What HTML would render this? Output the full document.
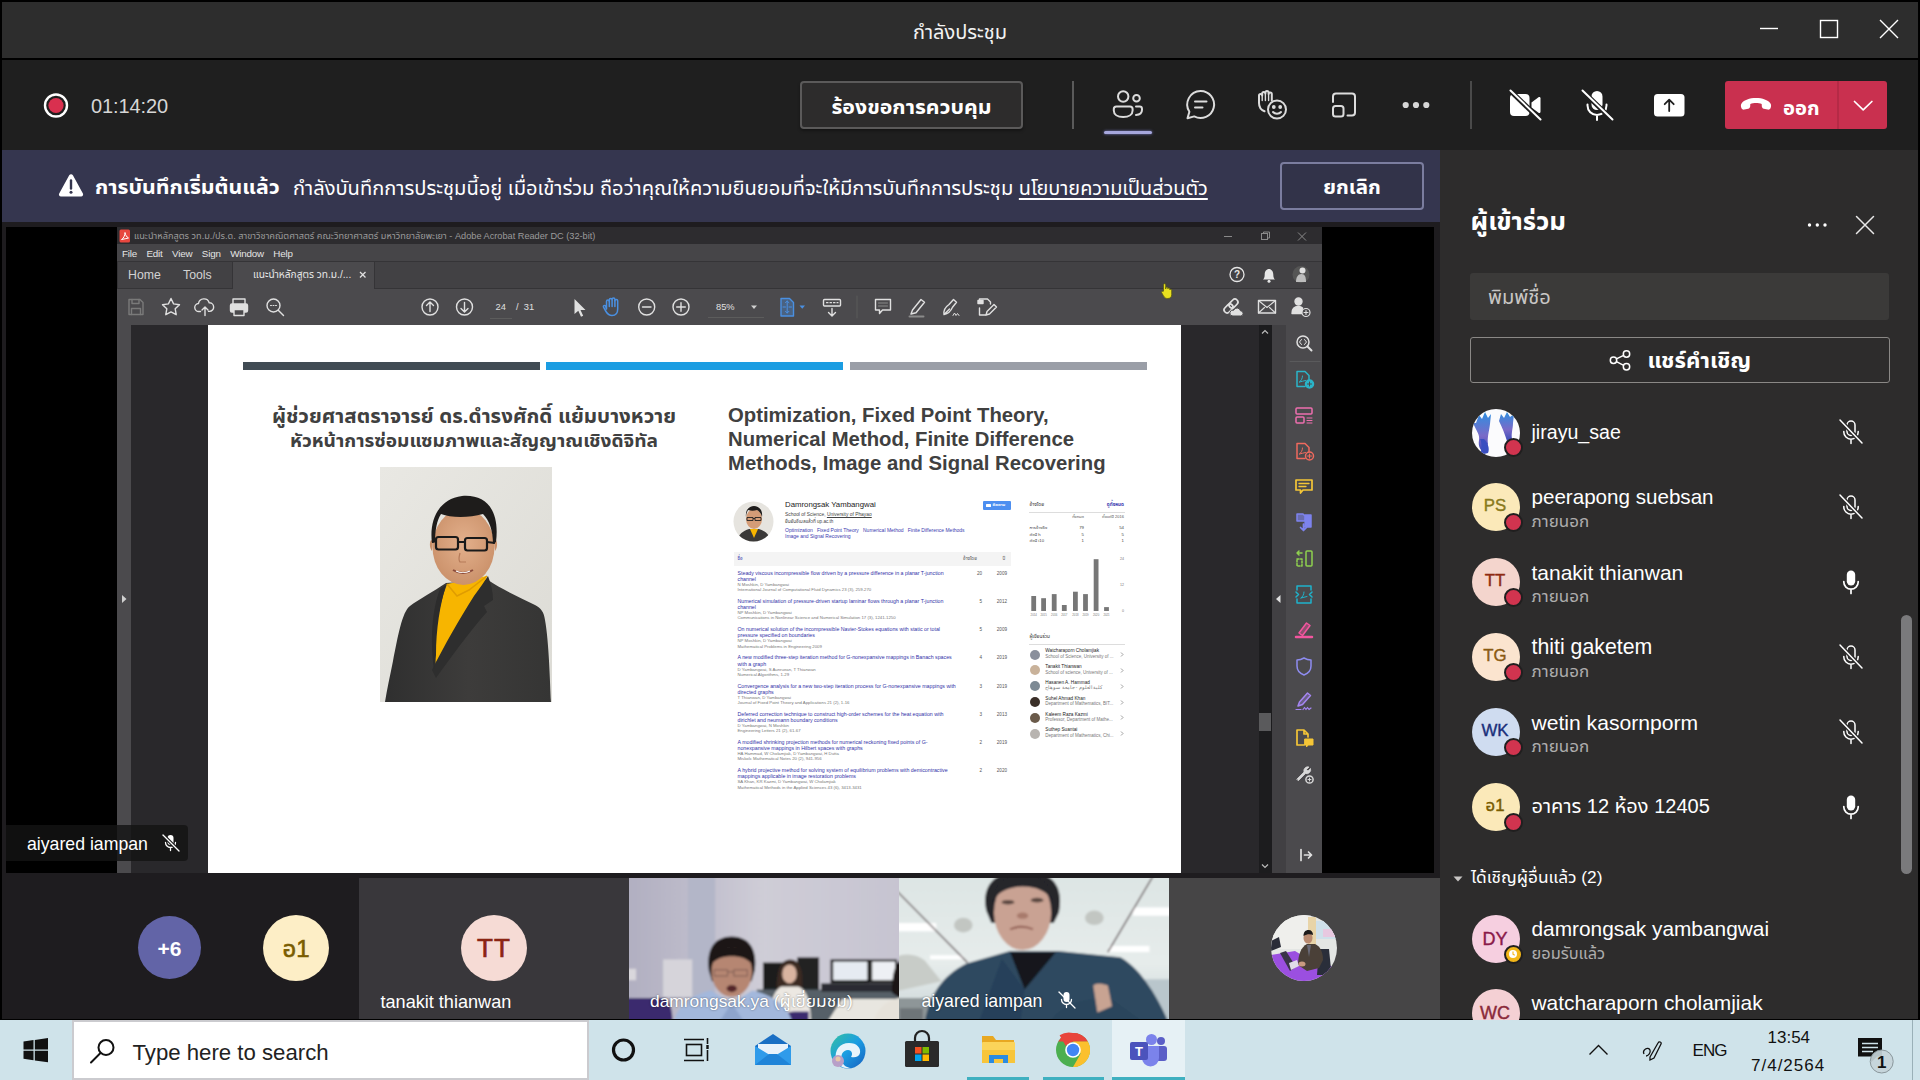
<!DOCTYPE html>
<html lang="th">
<head>
<meta charset="utf-8">
<title>กำลังประชุม</title>
<style>
*{box-sizing:border-box;margin:0;padding:0}
html,body{width:1920px;height:1080px;overflow:hidden;background:#000}
body{position:relative;font-family:"Liberation Sans","Noto Sans Thai UI","Noto Sans Thai","Leelawadee UI","Loma",sans-serif;color:#fff}
.abs{position:absolute}
.t{position:absolute;white-space:nowrap;line-height:1}
svg{position:absolute;overflow:visible}
/* ---------- frame ---------- */
#titlebar{left:2px;top:2px;width:1916px;height:56px;background:#2d2d2d}
#toolbar{left:2px;top:60px;width:1916px;height:90px;background:#1f1f1f}
#banner{left:2px;top:150px;width:1438px;height:72px;background:#35364f}
#stagebg{left:2px;top:222px;width:1438px;height:797px;background:#1e1c1f}
#stage{left:6px;top:227px;width:1428px;height:646px;background:#000}
#panel{left:1440px;top:150px;width:478px;height:869px;background:#2d2c2c}
#taskbar{left:0;top:1020px;width:1920px;height:60px;background:#cfe3ea}
</style>
</head>
<body>
<div id="titlebar" class="abs"></div>
<div id="toolbar" class="abs"></div>
<div id="banner" class="abs"></div>
<div id="stagebg" class="abs"></div>
<div id="stage" class="abs"></div>
<div id="panel" class="abs"></div>
<div id="taskbar" class="abs"></div>

<div class="t" style="left:860px;width:200px;text-align:center;top:22px;font-size:20px;color:#f2f2f2">กำลังประชุม</div>
<svg style="left:1755px;top:15px" width="150" height="30" viewBox="1755 15 150 30" fill="none" stroke="#fff" stroke-width="1.4">
<path d="M1760 28.5H1778"/><rect x="1820.5" y="20.5" width="17" height="17"/><path d="M1880 20L1898 38M1898 20L1880 38"/>
</svg>


<svg style="left:40px;top:90px" width="32" height="32" viewBox="40 90 32 32"><circle cx="56" cy="105.5" r="11" fill="none" stroke="#fff" stroke-width="2.4"/><circle cx="56" cy="105.5" r="7.6" fill="#d9304f"/></svg>
<div class="t" style="left:91px;top:96px;font-size:20px;color:#d6d6d6;letter-spacing:-0.1px">01:14:20</div>
<div class="abs" style="left:800px;top:81px;width:223px;height:48px;background:#2d2c2c;border:2px solid #5b5a5a;border-radius:4px;box-shadow:0 2px 3px rgba(0,0,0,.35)"></div>
<div class="t" style="left:800px;width:223px;text-align:center;top:97.200px;font-size:21.3px;font-weight:700;color:#fff">ร้องขอการควบคุม</div>
<div class="abs" style="left:1072px;top:81px;width:1.5px;height:48px;background:#5a5a5a"></div>
<div class="abs" style="left:1470px;top:81px;width:1.5px;height:48px;background:#4a4a4a"></div>
<div class="abs" style="left:1104px;top:131px;width:48px;height:3px;background:#a6a7dc;border-radius:2px;box-shadow:0 0 3px #7b7dc6"></div>
<!-- people -->
<svg style="left:1110px;top:88px" width="36" height="32" viewBox="1110 88 36 32" fill="none" stroke="#dcdcdc" stroke-width="2" stroke-linecap="round" stroke-linejoin="round">
<circle cx="1123.200" cy="96.500" r="5.200"/><circle cx="1136.500" cy="98.200" r="3.300"/>
<path d="M1116.500 106.500h13.500a2.600 2.600 0 0 1 2.600 2.600v1.400c0 4-3.600 6.500-9.400 6.500s-9.400-2.500-9.400-6.500v-1.400a2.600 2.600 0 0 1 2.600-2.600z"/>
<path d="M1136 106.500h3.600a2.400 2.400 0 0 1 2.400 2.400v.8c0 3-2.200 5-6 5.200"/>
</svg>
<!-- chat -->
<svg style="left:1183px;top:88px" width="36" height="34" viewBox="1183 88 36 34" fill="none" stroke="#dcdcdc" stroke-width="2" stroke-linecap="round" stroke-linejoin="round">
<path d="M1200.500 91a13.500 13.500 0 1 1-6.300 25.400l-6.700 1.900 1.900-6.500a13.500 13.500 0 0 1 11.100-20.800z"/><path d="M1195 101.500h11.500M1195 107.500h7.500"/>
</svg>
<!-- reactions -->
<svg style="left:1255px;top:88px" width="36" height="34" viewBox="1255 88 36 34" fill="none" stroke="#dcdcdc" stroke-width="2" stroke-linecap="round" stroke-linejoin="round">
<path d="M1259 103v-7.500a1.600 1.600 0 0 1 3.200 0v-2a1.600 1.600 0 0 1 3.200 0v-.8a1.600 1.600 0 0 1 3.200 0v1.300a1.600 1.600 0 0 1 3.200 0v6.500M1259 103c0 4 1.800 6.800 5.500 8.300" />
<path d="M1262.200 95.500v5M1265.400 93.500v7M1268.600 94v6.500" stroke-width="1.400"/>
<circle cx="1277" cy="109.500" r="9"/><circle cx="1273.800" cy="107" r=".9" fill="#dcdcdc"/><circle cx="1280.200" cy="107" r=".9" fill="#dcdcdc"/><path d="M1273 112c2 2.300 6 2.300 8 0"/>
</svg>
<!-- rooms -->
<svg style="left:1330px;top:90px" width="30" height="30" viewBox="1330 90 30 30" fill="none" stroke="#dcdcdc" stroke-width="2" stroke-linecap="round" stroke-linejoin="round">
<path d="M1333 102v-5.500a3 3 0 0 1 3-3h16a3 3 0 0 1 3 3v16a3 3 0 0 1-3 3h-4.500"/><rect x="1333" y="106" width="10.500" height="10.500" rx="2.500"/>
</svg>
<svg style="left:1400px;top:100px" width="32" height="10" viewBox="1400 100 32 10" fill="#d6d6d6"><circle cx="1405.700" cy="105" r="3.100"/><circle cx="1416" cy="105" r="3.100"/><circle cx="1426.300" cy="105" r="3.100"/></svg>
<!-- camera off -->
<svg style="left:1506px;top:88px" width="38" height="34" viewBox="1506 88 38 34">
<path d="M1510 98a4 4 0 0 1 4-4h11.500a4 4 0 0 1 4 4v14a4 4 0 0 1-4 4h-11.500a4 4 0 0 1-4-4z" fill="#fff"/><path d="M1531.500 102.500l7-5.200c.9-.6 2-.1 2 1v13.400c0 1.100-1.100 1.600-2 1l-7-5.200z" fill="#fff"/>
<path d="M1510 90.500l30.500 29.500" stroke="#1f1f1f" stroke-width="5"/><path d="M1510.500 90.500l30 29" stroke="#fff" stroke-width="2" stroke-linecap="round"/>
</svg>
<!-- mic off -->
<svg style="left:1578px;top:88px" width="38" height="34" viewBox="1578 88 38 34">
<rect x="1591.500" y="91" width="11" height="19" rx="5.500" fill="#fff"/><path d="M1587.500 104.500v1a9.500 9.500 0 0 0 19 0v-1M1597 115v5" fill="none" stroke="#fff" stroke-width="2" stroke-linecap="round"/>
<path d="M1582 90.500l30.500 29.500" stroke="#1f1f1f" stroke-width="5"/><path d="M1582.500 90.500l30 29" stroke="#fff" stroke-width="2" stroke-linecap="round"/>
</svg>
<!-- share -->
<svg style="left:1652px;top:92px" width="34" height="26" viewBox="1652 92 34 26"><rect x="1654" y="94" width="30.500" height="22.500" rx="3.500" fill="#fff"/><path d="M1669.200 111v-11M1664.700 104.200l4.500-4.500 4.500 4.500" fill="none" stroke="#1f1f1f" stroke-width="1.800" stroke-linecap="round" stroke-linejoin="round"/></svg>
<!-- leave -->
<div class="abs" style="left:1725px;top:81px;width:162px;height:48px;background:#c9304f;border-radius:3px"></div>
<div class="abs" style="left:1837px;top:81px;width:1.5px;height:48px;background:#b52a46"></div>
<svg style="left:1739px;top:96px" width="34" height="18" viewBox="1739 96 34 18"><path d="M1756 98c-6.500 0-12 2-14.300 5.200-1 1.400-1 3.200-.3 4.800.5 1.200 1.700 1.900 3 1.600l3.800-.8c1.200-.3 2-1.300 2-2.500l.1-2.300c1.700-.8 3.600-1.100 5.700-1.100s4 .3 5.700 1.100l.1 2.300c0 1.200.8 2.200 2 2.500l3.800.8c1.300.3 2.500-.4 3-1.600.7-1.600.7-3.400-.3-4.800-2.300-3.200-7.800-5.200-14.300-5.200z" fill="#fff"/></svg>
<div class="t" style="left:1783px;top:97.500px;font-size:20.2px;font-weight:700;color:#fff">ออก</div>
<svg style="left:1852px;top:98px" width="22" height="14" viewBox="1852 98 22 14"><path d="M1854.500 101.500l8.700 8.300 8.700-8.300" fill="none" stroke="#fff" stroke-width="1.700" stroke-linecap="round" stroke-linejoin="round"/></svg>


<svg style="left:58px;top:172px" width="28" height="26" viewBox="58 172 28 26"><path d="M69.200 175.300c.8-1.500 2.900-1.500 3.700 0l10 18.300c.7 1.400-.2 3-1.800 3h-20.100c-1.600 0-2.600-1.600-1.800-3z" fill="#fff"/><path d="M71 180.500v8" stroke="#35364f" stroke-width="2.400" stroke-linecap="round"/><circle cx="71" cy="192.300" r="1.500" fill="#35364f"/></svg>
<div class="t" style="left:95px;top:177px;font-size:21.3px;font-weight:700;color:#fff">การบันทึกเริ่มต้นแล้ว</div>
<div class="t" style="left:293px;top:178px;font-size:20.1px;color:#fff">กำลังบันทึกการประชุมนี้อยู่ เมื่อเข้าร่วม ถือว่าคุณให้ความยินยอมที่จะให้มีการบันทึกการประชุม <span style="text-decoration:underline;text-decoration-thickness:1.600px;text-underline-offset:3px;font-size:19.85px">นโยบายความเป็นส่วนตัว</span></div>
<div class="abs" style="left:1280px;top:162px;width:144px;height:48px;border:2px solid #7b7d9f;border-radius:4px;background:#323349"></div>
<div class="t" style="left:1280px;width:144px;text-align:center;top:177px;font-size:20.5px;font-weight:700;color:#fff">ยกเลิก</div>


<div id="acro" class="abs" style="left:0;top:0;width:0;height:0">
<div class="abs" style="left:117px;top:227px;width:1205px;height:17px;background:#2d2c2f"></div>
<div class="abs" style="left:117px;top:244px;width:1205px;height:17px;background:#464548"></div>
<div class="abs" style="left:117px;top:261px;width:1205px;height:28px;background:#424144;border-top:1px solid #353437;border-bottom:1px solid #353437"></div>
<div class="abs" style="left:117px;top:261px;width:116px;height:28px;background:#424144;border:1px solid #353437"></div>
<div class="abs" style="left:233px;top:262px;width:141px;height:27px;background:#4b4a4d"></div><div class="abs" style="left:374px;top:262px;width:1px;height:26px;background:#353437"></div>
<div class="abs" style="left:117px;top:289px;width:1205px;height:36px;background:#4b4a4d"></div>
<div class="abs" style="left:117px;top:325px;width:1205px;height:548px;background:#29282b"></div>
<div class="abs" style="left:117px;top:325px;width:14px;height:548px;background:#4b4a4d"></div>
<div class="abs" style="left:1272px;top:325px;width:14px;height:548px;background:#414043"></div>
<div class="abs" style="left:1286px;top:325px;width:36px;height:548px;background:#4b4a4d"></div>
<div class="abs" style="left:1259px;top:325px;width:13px;height:548px;background:#1c1c1e"></div>
<div class="abs" style="left:1259px;top:713px;width:12px;height:18px;background:#5a5a5c"></div>
<div class="abs" style="left:208px;top:325px;width:973px;height:548px;background:#fff"></div>
<!-- title -->
<svg style="left:119px;top:229px" width="12" height="14" viewBox="0 0 12 14"><rect x=".5" y=".5" width="10.500" height="13" rx="1.500" fill="#e8473f"/><path d="M2.500 10.500c2-1 3.500-4 3.500-7M2.500 10.500c2.500-.5 5-1 7-1.500M6 3.500c.5 2.500 1.500 4.500 3.500 5.500" stroke="#fff" stroke-width="1" fill="none"/></svg>
<div class="t" style="left:134px;top:232px;font-size:9.2px;color:#9b9b9b">แนะนำหลักสูตร วท.ม./ปร.ด. สาขาวิชาคณิตศาสตร์ คณะวิทยาศาสตร์ มหาวิทยาลัยพะเยา - Adobe Acrobat Reader DC (32-bit)</div>
<svg style="left:1220px;top:229px" width="92" height="14" viewBox="1220 229 92 14" fill="none" stroke="#8a8a8a" stroke-width="1"><path d="M1224 236.500h8"/><rect x="1261.500" y="233.500" width="6" height="6"/><path d="M1263.500 233.500v-1.500h6v6h-2"/><path d="M1298 232.500l8 8M1306 232.500l-8 8"/></svg>
<!-- menu -->
<div class="t" style="left:122px;top:249px;font-size:9.8px;color:#e4e4e4;word-spacing:0;letter-spacing:-.2px"><span>File</span><span style="margin-left:9.500px">Edit</span><span style="margin-left:9.500px">View</span><span style="margin-left:9.500px">Sign</span><span style="margin-left:9.500px">Window</span><span style="margin-left:9.500px">Help</span></div>
<!-- tabs -->
<div class="t" style="left:128px;top:269px;font-size:12.3px;color:#d2d2d2">Home</div>
<div class="t" style="left:183px;top:269px;font-size:12.3px;color:#d2d2d2">Tools</div>
<div class="t" style="left:253px;top:270px;font-size:10.2px;color:#e6e6e6">แนะนำหลักสูตร วท.ม./...</div>
<svg style="left:358px;top:270px" width="10" height="10" viewBox="0 0 10 10"><path d="M2 2l5.500 5.500M7.500 2l-5.500 5.500" stroke="#e0e0e0" stroke-width="1.300"/></svg>
<svg style="left:1227px;top:264px" width="90" height="22" viewBox="1227 264 90 22"><circle cx="1237" cy="274.500" r="7" fill="none" stroke="#e6e6e6" stroke-width="1.300"/><text x="1237" y="278.300" font-size="10" font-weight="700" fill="#e6e6e6" text-anchor="middle" font-family="Liberation Sans,sans-serif">?</text>
<path d="M1263 279.500c1.200-1 1.700-2.500 1.700-5 0-3.200 1.800-5.500 4.300-5.500s4.300 2.300 4.300 5.500c0 2.500.5 4 1.700 5z" fill="#e6e6e6"/><circle cx="1269" cy="281.200" r="1.500" fill="#e6e6e6"/>
<circle cx="1301" cy="274.500" r="8.500" fill="#555"/><path d="M1296 282c0-5 2-8 5.500-8s4.500 3 4.500 8" fill="#bdbdbd"/><circle cx="1302.500" cy="270.500" r="3" fill="#e0e0e0"/></svg>
<!-- toolbar icons -->
<svg style="left:120px;top:291px" width="1200" height="32" viewBox="120 291 1200 32" fill="none" stroke="#e0e0e0" stroke-width="1.400" stroke-linejoin="round" stroke-linecap="round">
<g stroke="#7a7a7a"><path d="M129 299.500h11l3 3v12h-14z"/><path d="M132 299.500v4h7v-4M131.500 314.500v-6h9v6"/></g>
<path d="M171 298.500l2.600 5.400 5.900.8-4.300 4.100 1 5.900-5.200-2.800-5.200 2.800 1-5.900-4.300-4.100 5.900-.8z"/>
<path d="M200.500 311.500h-1.500a4 4 0 0 1-.5-8 5.500 5.500 0 0 1 10.700-.7 4.300 4.300 0 0 1 .3 8.600h-1M205 315.500v-8M202 310l3-3 3 3"/>
<g><path d="M233 304v-5h12v5" /><rect x="230.500" y="304" width="17" height="8" rx="1.500" fill="#e0e0e0"/><rect x="234" y="309.500" width="10" height="6" fill="#4b4a4d"/></g>
<circle cx="273.500" cy="305.500" r="6.500"/><path d="M278.500 310.500l5 5"/><path d="M270.500 305.500h6" stroke-width="1" stroke-dasharray="1 1.500"/>
<circle cx="430" cy="307" r="8"/><path d="M430 311.500v-9M426.500 305.500l3.500-3.500 3.500 3.500"/>
<circle cx="464.500" cy="307" r="8"/><path d="M464.500 302.500v9M461 308.500l3.500 3.500 3.500-3.500"/>
<path d="M574.500 299v15l3.800-3.300 2.700 6 2.200-1-2.700-5.800h5z" fill="#e0e0e0" stroke="none"/>
<g stroke="#4a90e2" stroke-width="1.500"><path d="M606.500 309v-7.500a1.400 1.400 0 0 1 2.800 0v-1.700a1.400 1.400 0 0 1 2.800 0v-.3a1.400 1.400 0 0 1 2.800 0v1.300a1.400 1.400 0 0 1 2.800 0v8.200c0 4-2 6.500-5.700 6.500-3 0-4.500-1.500-6-4l-2.500-4.300c-.6-1.200 1-2.300 2-1.200z"/><path d="M609.300 301.500v5M612.100 300v6.500M614.900 300.800v5.700"/></g>
<circle cx="646.700" cy="307" r="8"/><path d="M642.500 307h8.500"/>
<circle cx="681" cy="307" r="8"/><path d="M676.700 307h8.600M681 302.700v8.600"/>
<path d="M751 305.500h6l-3 3.500z" fill="#d0d0d0" stroke="none"/>
<g stroke="#4a90e2"><path d="M781 298.500h8.500l4 4v13.500h-12.500z" fill="#4a90e2" fill-opacity=".35"/><path d="M787.200 301v12M785.500 302.700l1.700-1.700 1.700 1.700M785.500 311.300l1.700 1.700 1.700-1.700M783 307h2.500M789 307h2.500" stroke-width="1"/></g>
<path d="M799.500 305.500h5.500l-2.750 3.200z" fill="#4a90e2" stroke="none"/>
<rect x="823.500" y="299.500" width="17" height="6.500" rx="1"/><path d="M826.500 302.700h1.500M830 302.700h1.500M833.500 302.700h1.500M837 302.700h1" stroke-width="1.200"/><path d="M832 308.500v7M828.500 312.500l3.500 3.500 3.500-3.500"/>
<path d="M857 296v22" stroke="#5a5a5a" stroke-width="1"/>
<path d="M875.500 299.500h15v10.500h-8l-3 3.500v-3.500h-4z"/><path d="M878.500 303h9M878.500 306h9" stroke="#8a8a8a" stroke-width="1"/>
<path d="M911 314l1.500-4 8.500-10.500 3.500 2.800-8.500 10.500z"/><path d="M909.500 316.500h14" stroke="#8a8a8a" stroke-width="2"/>
<path d="M944 314.500c-.5-4 2-8 5-10l4.500-5 3 2.700-4 5c-1.500 3.500-4.500 6.500-8.500 7.300zM944 314.500l5.500-5.500"/><path d="M953 315.500l1.500-2.500 1.500 2.500 1.500-2 1.500 2" stroke-width="1"/>
<path d="M979.500 303v-4h8l3 3v2M979.500 308v7h6" /><path d="M978 300.500h5v3h-5z" fill="#e0e0e0"/><path d="M986 315l1-3.500 7-7 2.500 2.500-7 7z"/>
<g transform="rotate(-45 1231 306)" stroke-width="1.700"><rect x="1222.500" y="303" width="10" height="6" rx="3"/><rect x="1229.500" y="303" width="10" height="6" rx="3"/></g><path d="M1232 316h8.500a2.600 2.600 0 0 0 0-5.200 3.600 3.600 0 0 0-6.800-.6 3 3 0 0 0-1.700 5.800z" fill="#e0e0e0" stroke="#4b4a4d" stroke-width="1"/>
<rect x="1258.500" y="300.500" width="17" height="12.500"/><path d="M1258.500 300.500l8.500 7 8.500-7M1258.500 313l6-5.500M1275.500 313l-6-5.500" stroke-width="1.100"/>
<circle cx="1298.500" cy="301.500" r="3.500" fill="#e0e0e0"/><path d="M1292 313.500c0-5 3-7 6.500-7 1.500 0 3 .5 4 1.500l-1 5.500z" fill="#e0e0e0"/><circle cx="1306" cy="312.500" r="4" fill="#4b4a4d" stroke="#e0e0e0" stroke-width="1.200"/><path d="M1304 312.500h4M1306 310.500v4" stroke-width="1.100"/>
</svg>
<div class="t" style="left:495.500px;top:302.500px;font-size:9.300px;color:#e0e0e0">24</div>
<div class="t" style="left:516px;top:302.500px;font-size:9.300px;color:#e0e0e0">/&nbsp; 31</div>
<div class="abs" style="left:490px;top:318px;width:22px;height:1px;background:#5c5c5c"></div>
<div class="t" style="left:716px;top:302.500px;font-size:9.300px;color:#e0e0e0">85%</div>
<div class="abs" style="left:708px;top:317px;width:56px;height:1px;background:#5c5c5c"></div>
<!-- side arrows / scroll -->
<svg style="left:119px;top:593px" width="10" height="12" viewBox="0 0 10 12"><path d="M3 2l4.500 4-4.500 4z" fill="#d0d0d0"/></svg>
<svg style="left:1273px;top:593px" width="10" height="12" viewBox="0 0 10 12"><path d="M7.500 2l-4.500 4 4.500 4z" fill="#e0e0e0"/></svg>
<svg style="left:1259px;top:327px" width="12" height="10" viewBox="0 0 12 10"><path d="M3 6.500l3-3 3 3" fill="none" stroke="#bbb" stroke-width="1.200"/></svg>
<svg style="left:1259px;top:861px" width="12" height="10" viewBox="0 0 12 10"><path d="M3 3.500l3 3 3-3" fill="none" stroke="#bbb" stroke-width="1.200"/></svg>

<svg style="left:1290px;top:330px" width="30" height="540" viewBox="1290 330 30 540" fill="none" stroke-width="1.500" stroke-linecap="round" stroke-linejoin="round">
<g stroke="#e0e0e0"><circle cx="1303" cy="342" r="6"/><path d="M1307.500 346.500l4 4" stroke-width="2"/><path d="M1301.500 339.500l-2 2.500 2 2.500M1304.500 339.500l2 2.500-2 2.500" stroke-width="1"/></g>
<path d="M1290 361.500h30" stroke="#5a5a5c" stroke-width="1"/>
<g stroke="#2bb5c9"><path d="M1305 386.500h-8v-15h8l4 4v4"/><path d="M1299.500 382c1.500-1 3-3.500 3-6M1299.500 382c2-.5 4-1 6-1.500" stroke-width="1"/><circle cx="1309.500" cy="384" r="4" fill="#2bb5c9"/><path d="M1307.500 384h4M1309.500 382v4" stroke="#4b4a4d" stroke-width="1"/></g>
<g stroke="#ee6fae"><rect x="1296" y="408" width="16" height="6" rx="1"/><rect x="1296" y="417" width="8" height="6" rx="1"/><path d="M1307 418h5M1307 420.500h5M1307 423h5" stroke-width="1"/></g>
<g stroke="#f06a5e"><path d="M1305 458.500h-8v-15h8l4 4v4"/><path d="M1299.500 454c1.500-1 3-3.500 3-6M1299.500 454c2-.5 4-1 6-1.500" stroke-width="1"/><circle cx="1309.500" cy="456" r="4"/><path d="M1307.500 456h4M1309.500 454v4" stroke-width="1.200"/></g>
<g stroke="#f5c637"><path d="M1296 480h16v10h-9l-2.500 3v-3h-4.500z" stroke-width="1.700"/><path d="M1299 483.500h10M1299 486.500h7" stroke-width="1.300"/></g>
<g stroke="#7d83ee" fill="#7d83ee"><path d="M1297 514h6l2 2v5h-8z" fill-opacity=".6"/><path d="M1305 515h6v12h-7" /><path d="M1303.500 524v6M1300.500 527.500l3 3 3-3" fill="none" stroke-width="1.700"/></g>
<g stroke="#8fd14f"><rect x="1306" y="551" width="6" height="15" rx="1"/><path d="M1297 559h5v7h-5z" stroke-dasharray="2 1.500"/><path d="M1297 553h5M1299 551l-2 2 2 2" /></g>
<g stroke="#1fb3cb"><path d="M1297 590v-4h14v4M1297 599v4h14v-4M1296 592l2.500 2.500-2.500 2.500M1312 592l-2.500 2.500 2.500 2.500"/><path d="M1301 598c1.500-1 3-3.500 3-6M1301 598c2-.5 4-1 6-1.500" stroke-width="1"/></g>
<g stroke="#f2569f"><path d="M1299 633l7.500-10 3.500 2.500-7.500 10z" fill="#f2569f" fill-opacity=".4"/><path d="M1296 637h16" stroke-width="2.500"/></g>
<path d="M1304 658c2.500 1.500 5 2 7 2v6c0 4.500-3 7.500-7 9-4-1.500-7-4.500-7-9v-6c2 0 4.500-.5 7-2z" stroke="#8e8cf0"/>
<g stroke="#a586f2"><path d="M1298 706l1.500-4 8-9 3 2.500-8 9z" fill="#a586f2" fill-opacity=".35"/><path d="M1296 709.500h5M1303 709.500l1.500-2 1.500 2 1.500-2 1.500 2 2-1.500" stroke-width="1.200"/></g>
<g stroke="#f5c637"><path d="M1304 745h-7v-15h7l4 4v3M1304 730v4h4" stroke-width="1.700"/><path d="M1305 739h8v6h-5l-1.500 2v-2h-1.500z" fill="#f5c637" stroke-width="1"/></g>
<g stroke="#d8d8d8"><path d="M1297 779l7-7a4 4 0 0 1 5-5l-2.500 2.500 1.500 1.500 2.500-2.500a4 4 0 0 1-5 5l-7 7z" fill="#d8d8d8" stroke-width=".8"/><circle cx="1309.500" cy="779.500" r="3.600" fill="#4b4a4d"/><path d="M1308 779.500h3M1309.500 778v3" stroke-width="1"/></g>
<g stroke="#e0e0e0" stroke-width="1.700"><path d="M1301 849.500v11M1304.500 855h7M1308.500 852l3 3-3 3"/></g>
</svg>


<svg style="left:1159px;top:282px" width="16" height="18" viewBox="0 0 16 18"><path d="M4.500 9v-6.200a1.100 1.100 0 0 1 2.200 0v4.200l.1-1a1 1 0 0 1 2 .2v.6a1 1 0 0 1 2 .2v.8a1 1 0 0 1 1.900.3v4.400c0 2.500-1.500 4-4 4-2 0-3.200-.8-4.200-2.600l-1.900-3.300c-.5-1 .8-1.900 1.500-1z" fill="#e8e020" stroke="#5a5a10" stroke-width=".8"/></svg>
<div class="abs" style="left:243px;top:362px;width:297px;height:8px;background:#414b54"></div>
<div class="abs" style="left:546px;top:362px;width:297px;height:8px;background:#1b9de2"></div>
<div class="abs" style="left:850px;top:362px;width:297px;height:8px;background:#9a9ea7"></div>
<div class="t" style="left:174px;width:600px;text-align:center;top:405.800px;font-size:20.600px;font-weight:700;color:#404040">ผู้ช่วยศาสตราจารย์ ดร.ดำรงศักดิ์ แย้มบางหวาย</div>
<div class="t" style="left:174px;width:600px;text-align:center;top:430.800px;font-size:19.100px;font-weight:700;color:#404040">หัวหน้าการซ่อมแซมภาพและสัญญาณเชิงดิจิทัล</div>
<div class="t" style="left:728px;top:403px;font-size:20.300px;font-weight:700;color:#404040;line-height:24px">Optimization, Fixed Point Theory,<br>Numerical Method, Finite Difference<br>Methods, Image and Signal Recovering</div>

<svg style="left:380px;top:467px" width="172" height="235" viewBox="0 0 172 235">
<defs><linearGradient id="pbg" x1="0" y1="0" x2="1" y2="1"><stop offset="0" stop-color="#e9e8e3"/><stop offset="1" stop-color="#dcdbd5"/></linearGradient>
<linearGradient id="suit" x1="0" y1="0" x2="1" y2="0"><stop offset="0" stop-color="#2f2f2f"/><stop offset=".5" stop-color="#3d3c3b"/><stop offset="1" stop-color="#353534"/></linearGradient>
<radialGradient id="skin" cx=".5" cy=".45" r=".6"><stop offset="0" stop-color="#e3b08c"/><stop offset="1" stop-color="#c98f68"/></radialGradient></defs>
<rect width="172" height="235" fill="url(#pbg)"/>
<path d="M66 116c-12 8-28 17-36 23-8 6-12 30-17 55-3 15-6 28-8 41h166c-1-20-2-60-6-82-1-8-4-12-10-15-16-8-34-16-47-25z" fill="url(#suit)"/>
<path d="M67 117l40-8c-2 6-6 14-12 24-14 22-28 46-39 68-2-24 0-56 11-84z" fill="#f7b500"/>
<path d="M67 117l10 12 12-6 18-14" fill="none" stroke="#e09d00" stroke-width="1.500"/>
<path d="M108 109c3 8 5 16 5 24l-9 6 3 6c-18 20-38 48-51 66l-4-8c12-24 28-52 42-74 6-8 10-14 14-20z" fill="#2e2e2e"/>
<path d="M66 118c-6 20-10 44-10 70l-2 14c-4-28-2-60 6-80z" fill="#2c2c2c"/>
<ellipse cx="83.500" cy="80" rx="31" ry="38" fill="url(#skin)"/>
<path d="M52 84c-2-2-3-8-1-11l2 1zM115 84c2-2 3-8 1-11l-2 1z" fill="#c98f68"/>
<path d="M52 76c-3-22 6-44 30-47 24-2 38 14 34 46l-3 2c0-14-4-24-10-30-14 4-32 4-42 0-4 6-6 16-6 28z" fill="#1e1c1b"/>
<g fill="none" stroke="#1a1a1a" stroke-width="2.200"><rect x="56" y="70" width="22" height="12.500" rx="2.500"/><rect x="85" y="71" width="22" height="12.500" rx="2.500"/><path d="M78 75h7M107 75l8 1M56 74l-4 1"/></g>
<path d="M73 103c6 4 14 4 20 0" fill="none" stroke="#8a4a3a" stroke-width="1.800"/><path d="M76 104c4 2 10 2 14 0" stroke="#fff" stroke-width="1.200" fill="none"/>
<path d="M80 86c-1 4-2 7 0 9h6" fill="none" stroke="#b57a58" stroke-width="1.200"/>
</svg>

<div id="scholar" class="abs" style="left:0;top:0;width:0;height:0;font-family:'Liberation Sans','Noto Sans Thai UI','Loma',sans-serif">
<svg style="left:733px;top:501px" width="41" height="41" viewBox="0 0 41 41"><defs><clipPath id="sa"><circle cx="20.500" cy="20.500" r="20"/></clipPath></defs><g clip-path="url(#sa)"><rect width="41" height="41" fill="#e6e4df"/><path d="M4 41c1-8 6-11 12-13h10c6 2 11 5 12 13z" fill="#3a3938"/><path d="M17 28l4 9 4-9z" fill="#f7b500"/><ellipse cx="21" cy="18" rx="8" ry="10" fill="#d49c77"/><path d="M13 16c-1-8 4-11 8-11s9 3 8 11c-1-4-3-6-5-7-3 1-6 1-9 0-1 2-2 4-2 7z" fill="#1e1c1b"/><path d="M14 16.500h6v3h-6zM22 16.500h6v3h-6zM20 17.500h2" fill="none" stroke="#222" stroke-width=".9"/></g></svg>
<div class="t" style="left:785px;top:500.500px;font-size:7.800px;color:#222">Damrongsak Yambangwai</div>
<div class="t" style="left:785px;top:513px;font-size:4.900px;color:#444">School of Science, <span style="text-decoration:underline">University of Phayao</span></div>
<div class="t" style="left:785px;top:519.500px;font-size:4.600px;color:#444">ยืนยันอีเมลแล้วที่ up.ac.th</div>
<div class="t" style="left:785px;top:527.500px;font-size:5px;color:#3a3ab0;word-spacing:0">Optimization &nbsp; Fixed Point Theory &nbsp; Numerical Method &nbsp; Finite Difference Methods</div>
<div class="t" style="left:785px;top:533.500px;font-size:5px;color:#3a3ab0">Image and Signal Recovering</div>
<div class="abs" style="left:983px;top:501px;width:28px;height:9px;background:#4d8ff0;border-radius:1px"></div>
<div class="abs" style="left:986px;top:503.800px;width:4.500px;height:3.400px;background:#fff;border-radius:.5px"></div><div class="t" style="left:992.500px;top:503.300px;font-size:4.200px;color:#fff;font-weight:700">ติดตาม</div>
<div class="abs" style="left:734px;top:552px;width:277px;height:14px;background:#f4f4f4"></div>
<div class="t" style="left:737.500px;top:556.500px;font-size:4.600px;color:#3a3ab0">ชื่อ</div>
<div class="t" style="left:963px;top:556.500px;font-size:4.600px;color:#555">อ้างโดย</div>
<div class="t" style="left:1002.500px;top:556.500px;font-size:4.600px;color:#555">ปี</div>
<div class="t" style="left:737.500px;top:570.70px;font-size:5.250px;color:#3232a8">Steady viscous incompressible flow driven by a pressure difference in a planar T-junction</div>
<div class="t" style="left:737.500px;top:576.95px;font-size:5.250px;color:#3232a8">channel</div>
<div class="t" style="left:737.500px;top:582.90px;font-size:4.300px;color:#777">N Moshkin, D Yambangwai</div>
<div class="t" style="left:737.500px;top:588.10px;font-size:4.300px;color:#777">International Journal of Computational Fluid Dynamics 23 (3), 259-270</div>
<div class="t" style="left:960px;width:22px;text-align:right;top:571.8px;font-size:4.600px;color:#555">20</div>
<div class="t" style="left:990px;width:17px;text-align:right;top:571.8px;font-size:4.600px;color:#555">2009</div>
<div class="t" style="left:737.500px;top:598.90px;font-size:5.250px;color:#3232a8">Numerical simulation of pressure-driven startup laminar flows through a planar T-junction</div>
<div class="t" style="left:737.500px;top:605.15px;font-size:5.250px;color:#3232a8">channel</div>
<div class="t" style="left:737.500px;top:611.10px;font-size:4.300px;color:#777">NP Moshkin, D Yambangwai</div>
<div class="t" style="left:737.500px;top:616.30px;font-size:4.300px;color:#777">Communications in Nonlinear Science and Numerical Simulation 17 (3), 1241-1250</div>
<div class="t" style="left:960px;width:22px;text-align:right;top:600.0px;font-size:4.600px;color:#555">5</div>
<div class="t" style="left:990px;width:17px;text-align:right;top:600.0px;font-size:4.600px;color:#555">2012</div>
<div class="t" style="left:737.500px;top:627.10px;font-size:5.250px;color:#3232a8">On numerical solution of the incompressible Navier-Stokes equations with static or total</div>
<div class="t" style="left:737.500px;top:633.35px;font-size:5.250px;color:#3232a8">pressure specified on boundaries</div>
<div class="t" style="left:737.500px;top:639.30px;font-size:4.300px;color:#777">NP Moshkin, D Yambangwai</div>
<div class="t" style="left:737.500px;top:644.50px;font-size:4.300px;color:#777">Mathematical Problems in Engineering 2009</div>
<div class="t" style="left:960px;width:22px;text-align:right;top:628.2px;font-size:4.600px;color:#555">5</div>
<div class="t" style="left:990px;width:17px;text-align:right;top:628.2px;font-size:4.600px;color:#555">2009</div>
<div class="t" style="left:737.500px;top:655.30px;font-size:5.250px;color:#3232a8">A new modified three-step iteration method for G-nonexpansive mappings in Banach spaces</div>
<div class="t" style="left:737.500px;top:661.55px;font-size:5.250px;color:#3232a8">with a graph</div>
<div class="t" style="left:737.500px;top:667.50px;font-size:4.300px;color:#777">D Yambangwai, S Aunruean, T Thianwan</div>
<div class="t" style="left:737.500px;top:672.70px;font-size:4.300px;color:#777">Numerical Algorithms, 1-29</div>
<div class="t" style="left:960px;width:22px;text-align:right;top:656.4px;font-size:4.600px;color:#555">4</div>
<div class="t" style="left:990px;width:17px;text-align:right;top:656.4px;font-size:4.600px;color:#555">2019</div>
<div class="t" style="left:737.500px;top:683.50px;font-size:5.250px;color:#3232a8">Convergence analysis for a new two-step iteration process for G-nonexpansive mappings with</div>
<div class="t" style="left:737.500px;top:689.75px;font-size:5.250px;color:#3232a8">directed graphs</div>
<div class="t" style="left:737.500px;top:695.70px;font-size:4.300px;color:#777">T Thianwan, D Yambangwai</div>
<div class="t" style="left:737.500px;top:700.90px;font-size:4.300px;color:#777">Journal of Fixed Point Theory and Applications 21 (2), 1-16</div>
<div class="t" style="left:960px;width:22px;text-align:right;top:684.6px;font-size:4.600px;color:#555">3</div>
<div class="t" style="left:990px;width:17px;text-align:right;top:684.6px;font-size:4.600px;color:#555">2019</div>
<div class="t" style="left:737.500px;top:711.70px;font-size:5.250px;color:#3232a8">Deferred correction technique to construct high-order schemes for the heat equation with</div>
<div class="t" style="left:737.500px;top:717.95px;font-size:5.250px;color:#3232a8">dirichlet and neumann boundary conditions</div>
<div class="t" style="left:737.500px;top:723.90px;font-size:4.300px;color:#777">D Yambangwai, N Moshkin</div>
<div class="t" style="left:737.500px;top:729.10px;font-size:4.300px;color:#777">Engineering Letters 21 (2), 61-67</div>
<div class="t" style="left:960px;width:22px;text-align:right;top:712.8px;font-size:4.600px;color:#555">3</div>
<div class="t" style="left:990px;width:17px;text-align:right;top:712.8px;font-size:4.600px;color:#555">2013</div>
<div class="t" style="left:737.500px;top:739.90px;font-size:5.250px;color:#3232a8">A modified shrinking projection methods for numerical reckoning fixed points of G-</div>
<div class="t" style="left:737.500px;top:746.15px;font-size:5.250px;color:#3232a8">nonexpansive mappings in Hilbert spaces with graphs</div>
<div class="t" style="left:737.500px;top:752.10px;font-size:4.300px;color:#777">HA Hammad, W Cholamjiak, D Yambangwai, H Dutta</div>
<div class="t" style="left:737.500px;top:757.30px;font-size:4.300px;color:#777">Miskolc Mathematical Notes 20 (2), 941-956</div>
<div class="t" style="left:960px;width:22px;text-align:right;top:741.0px;font-size:4.600px;color:#555">2</div>
<div class="t" style="left:990px;width:17px;text-align:right;top:741.0px;font-size:4.600px;color:#555">2019</div>
<div class="t" style="left:737.500px;top:768.10px;font-size:5.250px;color:#3232a8">A hybrid projective method for solving system of equilibrium problems with demicontractive</div>
<div class="t" style="left:737.500px;top:774.35px;font-size:5.250px;color:#3232a8">mappings applicable in image restoration problems</div>
<div class="t" style="left:737.500px;top:780.30px;font-size:4.300px;color:#777">SA Khan, KR Kazmi, D Yambangwai, W Cholamjiak</div>
<div class="t" style="left:737.500px;top:785.50px;font-size:4.300px;color:#777">Mathematical Methods in the Applied Sciences 43 (6), 3413-3431</div>
<div class="t" style="left:960px;width:22px;text-align:right;top:769.2px;font-size:4.600px;color:#555">2</div>
<div class="t" style="left:990px;width:17px;text-align:right;top:769.2px;font-size:4.600px;color:#555">2020</div>
<div class="t" style="left:1029.500px;top:502.500px;font-size:4.800px;color:#333">อ้างโดย</div>
<div class="t" style="left:1100px;width:24px;text-align:right;top:502.500px;font-size:4.600px;color:#3a3ab0;font-weight:700">ดูทั้งหมด</div>
<div class="abs" style="left:1028.500px;top:511.500px;width:96px;height:.600px;background:#ddd"></div>
<div class="t" style="left:1060px;width:24px;text-align:right;top:515px;font-size:4px;color:#555">ทั้งหมด</div>
<div class="t" style="left:1094px;width:30px;text-align:right;top:515px;font-size:4px;color:#555">ตั้งแต่ปี 2016</div>
<div class="t" style="left:1029.500px;top:526.0px;font-size:4.300px;color:#444">การอ้างอิง</div>
<div class="t" style="left:1064px;width:20px;text-align:right;top:526.0px;font-size:4.300px;color:#444">79</div>
<div class="t" style="left:1104px;width:20px;text-align:right;top:526.0px;font-size:4.300px;color:#444">54</div>
<div class="t" style="left:1029.500px;top:532.5px;font-size:4.300px;color:#444">ดัชนี h</div>
<div class="t" style="left:1064px;width:20px;text-align:right;top:532.5px;font-size:4.300px;color:#444">5</div>
<div class="t" style="left:1104px;width:20px;text-align:right;top:532.5px;font-size:4.300px;color:#444">5</div>
<div class="t" style="left:1029.500px;top:539.0px;font-size:4.300px;color:#444">ดัชนี i10</div>
<div class="t" style="left:1064px;width:20px;text-align:right;top:539.0px;font-size:4.300px;color:#444">1</div>
<div class="t" style="left:1104px;width:20px;text-align:right;top:539.0px;font-size:4.300px;color:#444">1</div>
<svg style="left:1028px;top:555px" width="100" height="66" viewBox="1028 555 100 66"><rect x="1031.3" y="596.0" width="4.800" height="15.0" fill="#777"/><text x="1033.7" y="616.300" font-size="2.800" fill="#777" text-anchor="middle" font-family="Liberation Sans,sans-serif">2014</text><rect x="1041.2" y="598.2" width="4.800" height="12.8" fill="#777"/><text x="1043.6" y="616.300" font-size="2.800" fill="#777" text-anchor="middle" font-family="Liberation Sans,sans-serif">2015</text><rect x="1051.8" y="594.1" width="4.800" height="16.9" fill="#777"/><text x="1054.2" y="616.300" font-size="2.800" fill="#777" text-anchor="middle" font-family="Liberation Sans,sans-serif">2016</text><rect x="1061.9" y="605.0" width="4.800" height="6.0" fill="#777"/><text x="1064.3" y="616.300" font-size="2.800" fill="#777" text-anchor="middle" font-family="Liberation Sans,sans-serif">2017</text><rect x="1073.0" y="591.7" width="4.800" height="19.3" fill="#777"/><text x="1075.4" y="616.300" font-size="2.800" fill="#777" text-anchor="middle" font-family="Liberation Sans,sans-serif">2018</text><rect x="1083.1" y="594.1" width="4.800" height="16.9" fill="#777"/><text x="1085.5" y="616.300" font-size="2.800" fill="#777" text-anchor="middle" font-family="Liberation Sans,sans-serif">2019</text><rect x="1093.7" y="559.2" width="4.800" height="51.8" fill="#777"/><text x="1096.1" y="616.300" font-size="2.800" fill="#777" text-anchor="middle" font-family="Liberation Sans,sans-serif">2020</text><rect x="1104.1" y="607.1" width="4.800" height="3.9" fill="#777"/><text x="1106.5" y="616.300" font-size="2.800" fill="#777" text-anchor="middle" font-family="Liberation Sans,sans-serif">2021</text><text x="1124" y="560" font-size="3.600" fill="#777" text-anchor="end" font-family="Liberation Sans,sans-serif">24</text><text x="1124" y="586" font-size="3.600" fill="#777" text-anchor="end" font-family="Liberation Sans,sans-serif">12</text><text x="1124" y="612" font-size="3.600" fill="#777" text-anchor="end" font-family="Liberation Sans,sans-serif">0</text></svg>
<div class="t" style="left:1029.500px;top:634.500px;font-size:4.800px;color:#333">ผู้เขียนร่วม</div>
<div class="abs" style="left:1028.500px;top:644px;width:96px;height:.600px;background:#ddd"></div>
<div class="abs" style="left:1030px;top:649.6px;width:10px;height:10px;border-radius:50%;background:#8a8f9c"></div>
<div class="t" style="left:1045.300px;top:649.4px;font-size:4.700px;color:#222">Watcharaporn Cholamjiak</div>
<div class="t" style="left:1045.300px;top:654.8px;font-size:4.500px;color:#777">School of Science, University of ...</div>
<svg style="left:1119.500px;top:652.1px" width="4" height="5" viewBox="0 0 4 5"><path d="M1 .5l2 2-2 2" fill="none" stroke="#777" stroke-width=".7"/></svg>
<div class="abs" style="left:1030px;top:665.4px;width:10px;height:10px;border-radius:50%;background:#c9b29a"></div>
<div class="t" style="left:1045.300px;top:665.2px;font-size:4.700px;color:#222">Tanakit Thianwan</div>
<div class="t" style="left:1045.300px;top:670.6px;font-size:4.500px;color:#777">School of science, University of ...</div>
<svg style="left:1119.500px;top:667.9px" width="4" height="5" viewBox="0 0 4 5"><path d="M1 .5l2 2-2 2" fill="none" stroke="#777" stroke-width=".7"/></svg>
<div class="abs" style="left:1030px;top:681.2px;width:10px;height:10px;border-radius:50%;background:#7d8a94"></div>
<div class="t" style="left:1045.300px;top:681.0px;font-size:4.700px;color:#222">Hasanen A. Hammad</div>
<div class="t" style="left:1045.300px;top:686.4px;font-size:4.500px;color:#777">كلية العلوم - جامعة سوهاج</div>
<svg style="left:1119.500px;top:683.7px" width="4" height="5" viewBox="0 0 4 5"><path d="M1 .5l2 2-2 2" fill="none" stroke="#777" stroke-width=".7"/></svg>
<div class="abs" style="left:1030px;top:697.0px;width:10px;height:10px;border-radius:50%;background:#3a2f28"></div>
<div class="t" style="left:1045.300px;top:696.8px;font-size:4.700px;color:#222">Suhel Ahmad Khan</div>
<div class="t" style="left:1045.300px;top:702.2px;font-size:4.500px;color:#777">Department of Mathematics, BIT...</div>
<svg style="left:1119.500px;top:699.5px" width="4" height="5" viewBox="0 0 4 5"><path d="M1 .5l2 2-2 2" fill="none" stroke="#777" stroke-width=".7"/></svg>
<div class="abs" style="left:1030px;top:712.8px;width:10px;height:10px;border-radius:50%;background:#6a5a4a"></div>
<div class="t" style="left:1045.300px;top:712.6px;font-size:4.700px;color:#222">Kaleem Raza Kazmi</div>
<div class="t" style="left:1045.300px;top:718.0px;font-size:4.500px;color:#777">Professor, Department of Mathe...</div>
<svg style="left:1119.500px;top:715.3px" width="4" height="5" viewBox="0 0 4 5"><path d="M1 .5l2 2-2 2" fill="none" stroke="#777" stroke-width=".7"/></svg>
<div class="abs" style="left:1030px;top:728.6px;width:10px;height:10px;border-radius:50%;background:#b8b4b0"></div>
<div class="t" style="left:1045.300px;top:728.4px;font-size:4.700px;color:#222">Suthep Suantai</div>
<div class="t" style="left:1045.300px;top:733.8px;font-size:4.500px;color:#777">Department of Mathematics, Chi...</div>
<svg style="left:1119.500px;top:731.1px" width="4" height="5" viewBox="0 0 4 5"><path d="M1 .5l2 2-2 2" fill="none" stroke="#777" stroke-width=".7"/></svg>
</div>

</div>


<div class="abs" style="left:6px;top:825px;width:182px;height:36px;background:rgba(20,20,20,.82);border-radius:0 4px 4px 0"></div>
<div class="t" style="left:27px;top:835.500px;font-size:17.700px;color:#fff">aiyared iampan</div>
<svg style="left:160px;top:832px" width="22" height="22" viewBox="0 0 22 22"><rect x="7.500" y="3" width="6" height="10" rx="3" fill="#fff"/><path d="M5.500 10.500a5 5 0 0 0 10 0M10.500 15.500v3" fill="none" stroke="#fff" stroke-width="1.300" stroke-linecap="round"/><path d="M3 3l16 16" stroke="#1a1a1a" stroke-width="3.500"/><path d="M3 3l16 16" stroke="#fff" stroke-width="1.300" stroke-linecap="round"/></svg>
<!-- strip -->
<div class="abs" style="left:359px;top:878px;width:270px;height:141px;background:#39373b"></div>
<div class="abs" style="left:1169px;top:878px;width:271px;height:141px;background:#464546"></div>
<div class="abs" style="left:138px;top:916px;width:63px;height:63px;border-radius:50%;background:#6264a7"></div>
<div class="t" style="left:138px;width:63px;text-align:center;top:938px;font-size:21px;font-weight:700;color:#fff">+6</div>
<div class="abs" style="left:263px;top:915px;width:66px;height:66px;border-radius:50%;background:#fdeec6"></div>
<div class="t" style="left:263px;width:66px;text-align:center;top:937px;font-size:24px;font-weight:400;-webkit-text-stroke:.6px #7a5c00;color:#7a5c00">อ1</div>
<div class="abs" style="left:461px;top:915px;width:66px;height:66px;border-radius:50%;background:#f6dbd5"></div>
<div class="t" style="left:461px;width:66px;text-align:center;top:935px;font-size:26px;font-weight:400;-webkit-text-stroke:.7px #8b2513;color:#8b2513;letter-spacing:1px">TT</div>
<div class="t" style="left:380.500px;top:992.500px;font-size:18.100px;color:#fff">tanakit thianwan</div>
<!-- video 1 -->
<svg style="left:629px;top:878px" width="270" height="141" viewBox="0 0 270 141">
<defs><filter id="vbl" x="-10%" y="-10%" width="120%" height="120%"><feGaussianBlur stdDeviation=".8"/></filter><linearGradient id="w1" x1="0" y1="0" x2="1" y2="0"><stop offset="0" stop-color="#b0aec0"/><stop offset=".25" stop-color="#bebccb"/><stop offset=".5" stop-color="#cfcdd7"/><stop offset="1" stop-color="#c6c4d1"/></linearGradient><clipPath id="c1"><rect width="270" height="141"/></clipPath></defs>
<g clip-path="url(#c1)"><g filter="url(#vbl)"><g transform="translate(135 70.500) scale(1.040) translate(-135 -70.500)"><rect width="270" height="141" fill="url(#w1)"/>
<rect x="62" y="0" width="26" height="120" fill="#b3b6c8"/>
<rect x="38" y="81" width="28" height="36" fill="#d6d4da"/><rect x="3" y="90" width="9" height="11" fill="#d9d7dc"/>
<rect x="134" y="84" width="21" height="27" fill="#1c1c1e"/><rect x="167" y="79" width="21" height="33" fill="#202022"/>
<rect x="128" y="110" width="142" height="31" fill="#566068"/>
<rect x="199" y="81" width="38" height="23" fill="#111"/><rect x="201.500" y="83" width="33" height="18" fill="#e6ebf2"/>
<rect x="237" y="81" width="26" height="23" fill="#222"/><rect x="239" y="83" width="22" height="18" fill="#eef0f4"/>
<rect x="190" y="104" width="70" height="8" fill="#2a2c30"/>
<path d="M196 141l14-22h50l10 4v18z" fill="#e8e6e0"/>
<path d="M258 113c0-20 4-32 12-32v40z" fill="#1a1718"/><path d="M240 141c4-14 14-22 30-24v24z" fill="#e6e2da"/>
<path d="M148 113c-2-18 2-32 12-32s14 12 11 32z" fill="#3a2a24"/><ellipse cx="159.500" cy="95" rx="7" ry="9" fill="#d9b4a0"/>
<path d="M140 141c0-20 6-32 12-34h16c8 3 12 14 12 34z" fill="#ece8e2"/>
<path d="M0 118h40c5 4 7 12 7 23h-47z" fill="#3b2a6e"/><path d="M150 141c2-6 6-10 14-10h14v10z" fill="#3b2a6e"/>
<path d="M82 92c-3-20 5-33 22-33s25 13 22 33l-3 10h-38z" fill="#1b1819"/>
<ellipse cx="104" cy="93" rx="19.500" ry="24" fill="#b68672"/>
<path d="M84 86c1-10 8-17 20-17s19 7 20 17c-5-6-12-8-20-8s-15 2-20 8z" fill="#1b1819"/>
<path d="M87 91h13v6h-13zM106 91h13v6h-13zM100 93h6" fill="none" stroke="#7a5a50" stroke-width=".9"/>
<ellipse cx="104" cy="109" rx="5" ry="3.500" fill="#55282a"/>
<path d="M48 141c4-16 18-26 36-30l20 12 20-12c18 4 34 14 38 30z" fill="#a3b8dc"/><path d="M92 141l12-18 12 18z" fill="#8ea4cc"/>
</g></g></g></svg>
<div class="t" style="left:650px;top:992.500px;font-size:17.400px;color:#fff;text-shadow:0 0 2px rgba(0,0,0,.5)">damrongsak.ya (ผู้เยี่ยมชม)</div>
<!-- video 2 -->
<svg style="left:899px;top:878px" width="270" height="141" viewBox="0 0 270 141">
<defs><linearGradient id="w2" x1="0" y1="0" x2="0" y2="1"><stop offset="0" stop-color="#dde5e4"/><stop offset=".6" stop-color="#e6eceb"/><stop offset="1" stop-color="#ccd6d8"/></linearGradient><clipPath id="c2"><rect width="270" height="141"/></clipPath></defs>
<g clip-path="url(#c2)"><g filter="url(#vbl)"><g transform="translate(135 70.500) scale(1.040) translate(-135 -70.500)"><rect width="270" height="141" fill="url(#w2)"/>
<rect x="0" y="46" width="41" height="8" fill="#fff"/><rect x="35" y="77" width="32" height="4" fill="#fff"/><rect x="230" y="31" width="40" height="8" fill="#fff"/><rect x="207" y="68" width="39" height="6" fill="#fff"/>
<path d="M0 12l71 72M250 0l-44 74" stroke="#5a4a4e" stroke-width="1.300" fill="none"/>
<ellipse cx="67" cy="48" rx="9" ry="7" fill="#c2c6c2"/><ellipse cx="193" cy="41" rx="9" ry="7" fill="#c2c6c2"/>
<path d="M0 80c10-6 22-4 30 2l16 20-46 10z" fill="#c8ccc8"/><path d="M0 118h40v23h-40z" fill="#8e9698"/><rect x="6" y="128" width="22" height="13" fill="#6e7478"/>
<path d="M230 100h40v41h-40z" fill="#b9c6cc"/>
<path d="M30 141c4-24 16-44 40-56l42-12h46l60 6c18 10 34 34 46 62z" fill="#2f4a60"/>
<path d="M112 74l14 36 30-36z" fill="#15181e"/><path d="M104 80l22 30-4 31h-40z" fill="#27405a"/>
<path d="M150 141c10-16 30-24 60-22l30 22z" fill="#2a455c"/>
<path d="M192 106c2-2 8-2 14 0l4 20-14 6z" fill="#c8a392"/>
<path d="M89 34c-5-24 8-38 35-38s40 12 35 40l-5 10h-60z" fill="#25252c"/>
<ellipse cx="124" cy="36" rx="27.500" ry="36" fill="#c9a293"/>
<path d="M95 26c1-16 10-26 29-26s29 10 29 24c-6-8-15-13-29-13s-24 5-29 15z" fill="#25252c"/>
<ellipse cx="110" cy="26" rx="6" ry="2.200" fill="#5a4640"/><ellipse cx="138" cy="24" rx="6" ry="2.200" fill="#5a4640"/><ellipse cx="124" cy="39" rx="5.500" ry="3" fill="#a87a6c"/><path d="M112 52c7-3 15-3 22 0" stroke="#8e5a50" stroke-width="1.800" fill="none"/>
</g></g></g></svg>
<div class="t" style="left:921.500px;top:992.500px;font-size:17.700px;color:#fff;text-shadow:0 0 2px rgba(0,0,0,.5)">aiyared iampan</div>
<svg style="left:1056px;top:989px" width="22" height="22" viewBox="0 0 22 22"><rect x="7.500" y="3" width="6" height="10" rx="3" fill="#fff"/><path d="M5.500 10.500a5 5 0 0 0 10 0M10.500 15.500v3" fill="none" stroke="#fff" stroke-width="1.300" stroke-linecap="round"/><path d="M3 3l16 16" stroke="#fff" stroke-width="1.300" stroke-linecap="round"/></svg>
<!-- avatar photo -->
<svg style="left:1270.800px;top:915px" width="66" height="66" viewBox="0 0 66 66"><defs><clipPath id="c3"><circle cx="33" cy="33" r="33"/></clipPath></defs><g clip-path="url(#c3)"><rect width="66" height="66" fill="#e4e6e4"/><rect x="0" y="0" width="40" height="34" fill="#efefec"/><rect x="37" y="2" width="8" height="30" fill="#e8d4a8"/><rect x="45" y="6" width="21" height="18" fill="#cfe0ea"/><rect x="52" y="14" width="12" height="8" fill="#e8c8e0"/><path d="M0 26l8-4 2 10-10 4z" fill="#2a2c38"/><path d="M0 40l24-4 20 12 22 4v14h-66z" fill="#9b4fe0"/><path d="M48 34h10l2 20-6 6h-8z" fill="#2a2e3a"/><path d="M27 50c0-10 3-18 9-21h8c5 2 8 8 8 16l-4 8-12 3z" fill="#4a4038"/><ellipse cx="37" cy="23" rx="4.500" ry="5.500" fill="#b98a70"/><path d="M32.500 21c0-4 2-6 5-6s4.500 2 4.500 5c-3-1-6-1-9.500 1z" fill="#1c1a1a"/><path d="M36 30l2 12 2-12z" fill="#6a6a78"/><path d="M9 38l6-2 10 16-6 4z" fill="#3a3448"/><path d="M18 48l8-3 2 6-8 4z" fill="#e0dce8"/><ellipse cx="31" cy="49" rx="3.500" ry="2.500" fill="#c89a80"/></g></svg>

<div class="t" style="left:1470.500px;top:208.500px;font-size:25.900px;font-weight:700;color:#fff">ผู้เข้าร่วม</div>
<svg style="left:1805px;top:220px" width="26" height="10" viewBox="1805 220 26 10" fill="#fff"><circle cx="1809.500" cy="225" r="1.700"/><circle cx="1817.300" cy="225" r="1.700"/><circle cx="1825" cy="225" r="1.700"/></svg>
<svg style="left:1853px;top:213px" width="24" height="24" viewBox="1853 213 24 24"><path d="M1856.500 216.500l17 17M1873.500 216.500l-17 17" stroke="#e8e8e8" stroke-width="1.500" stroke-linecap="round"/></svg>
<div class="abs" style="left:1470px;top:273px;width:419px;height:47px;background:#3b3a39;border-radius:3px"></div>
<div class="t" style="left:1488px;top:287px;font-size:20.100px;color:#c8c6c4">พิมพ์ชื่อ</div>
<div class="abs" style="left:1470px;top:337px;width:420px;height:46px;border:1.500px solid #8a8886;border-radius:3px;background:#2d2c2c"></div>
<svg style="left:1607px;top:348px" width="26" height="24" viewBox="1607 348 26 24" fill="none" stroke="#fff" stroke-width="1.500"><circle cx="1626.500" cy="354" r="3.200"/><circle cx="1613.500" cy="360.300" r="3.200"/><circle cx="1626.500" cy="366.700" r="3.200"/><path d="M1616.400 358.900l7.300-3.500M1616.400 361.700l7.300 3.600"/></svg>
<div class="t" style="left:1647.500px;top:350px;font-size:22.300px;font-weight:700;color:#fff">แชร์คำเชิญ</div>
<svg style="left:1472px;top:408.500px" width="48" height="48" viewBox="0 0 48 48"><defs><clipPath id="ja"><circle cx="24" cy="24" r="24"/></clipPath><linearGradient id="jg" x1="0" y1="0" x2="0" y2="1"><stop offset="0" stop-color="#2f8fe0"/><stop offset=".6" stop-color="#7a6ac8"/><stop offset="1" stop-color="#3a4ab8"/></linearGradient></defs><g clip-path="url(#ja)"><rect width="48" height="48" fill="#fbfbfd"/><path d="M4 14l3-8 3 4 3-7 3 6 3-4-1 10c-1 8-3 14-2 20l-4 8c-4-2-6-6-5-12 1-5-2-8-6-17z" fill="url(#jg)"/><path d="M27 12l2-7 3 4 3-6 3 5 4-3-1 9c0 6-2 10-1 16l-5 2c-2-6-4-12-8-20z" fill="url(#jg)"/><path d="M8 30c2 4 2 10 0 16l8-2c2-4 0-10-4-14z" fill="#3a4fc0"/></g></svg>
<div class="abs" style="left:1503.5px;top:437.8px;width:19px;height:19px;border-radius:50%;background:#d1344f;border:2px solid #201f1f"></div>
<div class="t" style="left:1531.500px;top:422.500px;font-size:19.6px;color:#fff">jirayu_sae</div>
<svg style="left:1837px;top:416.5px" width="28" height="30" viewBox="-14 -15 28 30"><rect x="-4" y="-11" width="8" height="14.500" rx="4" fill="none" stroke="#fff" stroke-width="1.500"/><path d="M-7.200 -.5v.5a7.200 7.200 0 0 0 14.400 0v-.5M0 7.500v4" fill="none" stroke="#fff" stroke-width="1.500" stroke-linecap="round"/><path d="M-11 -12l22 23" stroke="#2d2c2c" stroke-width="4"/><path d="M-11 -12l22 23" stroke="#fff" stroke-width="1.500" stroke-linecap="round"/></svg>
<div class="abs" style="left:1472px;top:482.5px;width:48px;height:48px;border-radius:50%;background:#fbe9b9"></div>
<div class="t" style="left:1472px;width:46px;text-align:center;top:498.2px;font-size:16.800px;color:#8a7a1c;font-weight:400;-webkit-text-stroke:.4px #8a7a1c">PS</div>
<div class="abs" style="left:1503.5px;top:512.8px;width:19px;height:19px;border-radius:50%;background:#d1344f;border:2px solid #201f1f"></div>
<div class="t" style="left:1531.500px;top:486.5px;font-size:20.6px;color:#fff">peerapong suebsan</div>
<div class="t" style="left:1531.500px;top:513.0px;font-size:17px;color:#adadad">ภายนอก</div>
<svg style="left:1837px;top:491.5px" width="28" height="30" viewBox="-14 -15 28 30"><rect x="-4" y="-11" width="8" height="14.500" rx="4" fill="none" stroke="#fff" stroke-width="1.500"/><path d="M-7.200 -.5v.5a7.200 7.200 0 0 0 14.400 0v-.5M0 7.500v4" fill="none" stroke="#fff" stroke-width="1.500" stroke-linecap="round"/><path d="M-11 -12l22 23" stroke="#2d2c2c" stroke-width="4"/><path d="M-11 -12l22 23" stroke="#fff" stroke-width="1.500" stroke-linecap="round"/></svg>
<div class="abs" style="left:1472px;top:557.5px;width:48px;height:48px;border-radius:50%;background:#f4d5cd"></div>
<div class="t" style="left:1472px;width:46px;text-align:center;top:573.2px;font-size:16.800px;color:#8e2a12;font-weight:400;-webkit-text-stroke:.4px #8e2a12">TT</div>
<div class="abs" style="left:1503.5px;top:587.8px;width:19px;height:19px;border-radius:50%;background:#d1344f;border:2px solid #201f1f"></div>
<div class="t" style="left:1531.500px;top:561.5px;font-size:21px;color:#fff">tanakit thianwan</div>
<div class="t" style="left:1531.500px;top:588.0px;font-size:17px;color:#adadad">ภายนอก</div>
<svg style="left:1837px;top:566.5px" width="28" height="30" viewBox="-14 -15 28 30"><rect x="-4.200" y="-11.500" width="8.400" height="15" rx="4.200" fill="#fff"/><path d="M-7.200 -.5v.5a7.200 7.200 0 0 0 14.400 0v-.5M0 7.500v4" fill="none" stroke="#fff" stroke-width="1.700" stroke-linecap="round"/></svg>
<div class="abs" style="left:1472px;top:632.5px;width:48px;height:48px;border-radius:50%;background:#fbe4cf"></div>
<div class="t" style="left:1472px;width:46px;text-align:center;top:648.2px;font-size:16.800px;color:#8a5a12;font-weight:400;-webkit-text-stroke:.4px #8a5a12">TG</div>
<div class="abs" style="left:1503.5px;top:662.8px;width:19px;height:19px;border-radius:50%;background:#d1344f;border:2px solid #201f1f"></div>
<div class="t" style="left:1531.500px;top:636.5px;font-size:21.3px;color:#fff">thiti gaketem</div>
<div class="t" style="left:1531.500px;top:663.0px;font-size:17px;color:#adadad">ภายนอก</div>
<svg style="left:1837px;top:641.5px" width="28" height="30" viewBox="-14 -15 28 30"><rect x="-4" y="-11" width="8" height="14.500" rx="4" fill="none" stroke="#fff" stroke-width="1.500"/><path d="M-7.200 -.5v.5a7.200 7.200 0 0 0 14.400 0v-.5M0 7.500v4" fill="none" stroke="#fff" stroke-width="1.500" stroke-linecap="round"/><path d="M-11 -12l22 23" stroke="#2d2c2c" stroke-width="4"/><path d="M-11 -12l22 23" stroke="#fff" stroke-width="1.500" stroke-linecap="round"/></svg>
<div class="abs" style="left:1472px;top:707.5px;width:48px;height:48px;border-radius:50%;background:#cfdcf0"></div>
<div class="t" style="left:1472px;width:46px;text-align:center;top:723.2px;font-size:16.800px;color:#1a2f7a;font-weight:400;-webkit-text-stroke:.4px #1a2f7a">WK</div>
<div class="abs" style="left:1503.5px;top:737.8px;width:19px;height:19px;border-radius:50%;background:#d1344f;border:2px solid #201f1f"></div>
<div class="t" style="left:1531.500px;top:711.5px;font-size:21.1px;color:#fff">wetin kasornporm</div>
<div class="t" style="left:1531.500px;top:738.0px;font-size:17px;color:#adadad">ภายนอก</div>
<svg style="left:1837px;top:716.5px" width="28" height="30" viewBox="-14 -15 28 30"><rect x="-4" y="-11" width="8" height="14.500" rx="4" fill="none" stroke="#fff" stroke-width="1.500"/><path d="M-7.200 -.5v.5a7.200 7.200 0 0 0 14.400 0v-.5M0 7.500v4" fill="none" stroke="#fff" stroke-width="1.500" stroke-linecap="round"/><path d="M-11 -12l22 23" stroke="#2d2c2c" stroke-width="4"/><path d="M-11 -12l22 23" stroke="#fff" stroke-width="1.500" stroke-linecap="round"/></svg>
<div class="abs" style="left:1472px;top:782.5px;width:48px;height:48px;border-radius:50%;background:#fbe9b9"></div>
<div class="t" style="left:1472px;width:46px;text-align:center;top:798.2px;font-size:16.800px;color:#7a5c00;font-weight:400;-webkit-text-stroke:.4px #7a5c00">อ1</div>
<div class="abs" style="left:1503.5px;top:812.8px;width:19px;height:19px;border-radius:50%;background:#d1344f;border:2px solid #201f1f"></div>
<div class="t" style="left:1531.500px;top:795.5px;font-size:20px;color:#fff">อาคาร 12 ห้อง 12405</div>
<svg style="left:1837px;top:791.5px" width="28" height="30" viewBox="-14 -15 28 30"><rect x="-4.200" y="-11.500" width="8.400" height="15" rx="4.200" fill="#fff"/><path d="M-7.200 -.5v.5a7.200 7.200 0 0 0 14.400 0v-.5M0 7.500v4" fill="none" stroke="#fff" stroke-width="1.700" stroke-linecap="round"/></svg>
<div class="abs" style="left:1901px;top:615px;width:11px;height:259px;border-radius:6px;background:#7a7a7c"></div>
<svg style="left:1452px;top:874px" width="12" height="10" viewBox="0 0 12 10"><path d="M1.500 2.500h9l-4.500 5z" fill="#c8c6c4"/></svg>
<div class="t" style="left:1471px;top:869px;font-size:17.300px;color:#fff">ได้เชิญผู้อื่นแล้ว (2)</div>
<div class="abs" style="left:1472px;top:914.500px;width:48px;height:48px;border-radius:50%;background:#f6cfe0"></div>
<div class="t" style="left:1472px;width:46px;text-align:center;top:929.500px;font-size:18px;color:#8a1a4a;-webkit-text-stroke:.4px #8a1a4a">DY</div>
<div class="abs" style="left:1503.5px;top:944.8px;width:19px;height:19px;border-radius:50%;background:#f2b619;border:2px solid #201f1f"></div><svg style="left:1508px;top:949.300px" width="10" height="10" viewBox="0 0 8 8"><circle cx="4" cy="4" r="3.200" fill="#fff"/><path d="M4 2v2.200l1.400.8" stroke="#f2b619" stroke-width=".9" fill="none"/></svg>
<div class="t" style="left:1531.500px;top:918.500px;font-size:20.850px;color:#fff">damrongsak yambangwai</div>
<div class="t" style="left:1531.500px;top:944.500px;font-size:16.400px;color:#adadad">ยอมรับแล้ว</div>
<div class="abs" style="left:1472px;top:988.500px;width:48px;height:31.500px;overflow:hidden"><div class="abs" style="left:0;top:0;width:48px;height:48px;border-radius:50%;background:#f4d0d4"></div><div class="t" style="left:0;width:46px;text-align:center;top:15px;font-size:18px;color:#8a2a3a;-webkit-text-stroke:.4px #8a2a3a">WC</div></div>
<div class="t" style="left:1531.500px;top:993px;font-size:20.900px;color:#fff">watcharaporn cholamjiak</div>

<div class="abs" style="left:72px;top:1020px;width:517px;height:60px;background:#fff;border:2px solid #cbcbcf"></div>
<svg style="left:22px;top:1037px" width="28" height="26" viewBox="22 1037 28 26" fill="#111"><path d="M23.500 1041.500l10-1.400v9.400h-10zM34.800 1039.900l13.200-1.900v11.500h-13.200zM23.500 1050.800h10v9.400l-10-1.400zM34.800 1050.800h13.200v11.500l-13.200-1.900z"/></svg>
<svg style="left:88px;top:1037px" width="30" height="28" viewBox="88 1037 30 28" fill="none" stroke="#111" stroke-width="2"><circle cx="106" cy="1047.500" r="7.500"/><path d="M100.500 1053l-9.500 9.500" stroke-linecap="round"/></svg>
<div class="t" style="left:132.500px;top:1041.500px;font-size:22.200px;color:#222">Type here to search</div>
<svg style="left:610px;top:1036px" width="30" height="30" viewBox="610 1036 30 30"><circle cx="623.500" cy="1050" r="10" fill="none" stroke="#111" stroke-width="3.200"/></svg>
<svg style="left:680px;top:1036px" width="34" height="30" viewBox="680 1036 34 30" fill="none" stroke="#111" stroke-width="1.600"><rect x="686.500" y="1044.500" width="15" height="11"/><path d="M684 1039.500h20M684 1060.500h20M707.500 1038v6M707.500 1050v11"/><rect x="706.300" y="1045" width="2.400" height="4" fill="#111" stroke="none"/></svg>
<!-- mail -->
<svg style="left:752px;top:1032px" width="42" height="36" viewBox="752 1032 42 36"><path d="M755 1046l18-12 18 12v19h-36z" fill="#1a6fc4"/><path d="M758 1044h30v16h-30z" fill="#e8f2fb"/><path d="M755 1046l18 11 18-11v19h-36z" fill="#2f9bea"/><path d="M755 1065l14-11h8l14 11z" fill="#1f84d8"/></svg>
<!-- edge -->
<svg style="left:828px;top:1032px" width="40" height="38" viewBox="828 1032 40 38"><defs><linearGradient id="eg" x1="0" y1="0" x2="1" y2="1"><stop offset="0" stop-color="#35c1a0"/><stop offset=".5" stop-color="#1b9de2"/><stop offset="1" stop-color="#1660c0"/></linearGradient></defs><circle cx="848" cy="1051" r="17.500" fill="url(#eg)"/><path d="M836 1060c-2-10 4-17 13-17 8 0 12 5 11 10-1 4-5 5-9 4 2-3 1-7-3-7-5 0-8 5-6 11 1 4 4 6 8 7-6 1-12-2-14-8z" fill="#e8f4fb"/><circle cx="838" cy="1061" r="6" fill="#b8a0c8"/><circle cx="838" cy="1059" r="2.500" fill="#e8c8a8"/></svg>
<!-- store -->
<svg style="left:903px;top:1030px" width="40" height="40" viewBox="903 1030 40 40"><path d="M915 1042v-4a7 7 0 0 1 14 0v4" fill="none" stroke="#222" stroke-width="2.200"/><rect x="905" y="1041" width="34" height="26" rx="1.500" fill="#2a2a2a"/><rect x="915" y="1047" width="6.500" height="6.500" fill="#f25022"/><rect x="922.500" y="1047" width="6.500" height="6.500" fill="#7fba00"/><rect x="915" y="1054.500" width="6.500" height="6.500" fill="#00a4ef"/><rect x="922.500" y="1054.500" width="6.500" height="6.500" fill="#ffb900"/></svg>
<!-- explorer -->
<svg style="left:978px;top:1032px" width="40" height="36" viewBox="978 1032 40 36"><path d="M982 1036h11l3 4h18v6h-32z" fill="#e8a822"/><rect x="982" y="1042" width="33" height="21" rx="1" fill="#fbd45a"/><path d="M982 1050h33v13h-33z" fill="#f7c53a"/><path d="M989 1063v-8h19v8h-5v-4h-9v4z" fill="#2a8be0"/></svg>
<!-- chrome -->
<svg style="left:1054px;top:1031px" width="38" height="38" viewBox="1054 1031 38 38"><circle cx="1073" cy="1050" r="17" fill="#4caf50"/><path d="M1073 1033a17 17 0 0 1 14.700 8.500h-14.700l-7.400 4.200-6-10.400a17 17 0 0 1 13.400-2.300z" fill="#e8453c"/><path d="M1073 1033a17 17 0 0 1 14.700 8.500h-29.400a17 17 0 0 1 14.700-8.500z" fill="#e8453c"/><path d="M1087.700 1041.500a17 17 0 0 1-14.700 25.500l7.400-12.800z" fill="#fbc02d"/><path d="M1073 1041.500h14.700a17 17 0 0 1-12 25.300l5-13z" fill="#fbc02d"/><circle cx="1073" cy="1050" r="7.800" fill="#fff"/><circle cx="1073" cy="1050" r="6.200" fill="#4285f4"/></svg>
<!-- teams -->
<div class="abs" style="left:1112px;top:1020px;width:73px;height:60px;background:#e6f1f5"></div>
<svg style="left:1128px;top:1032px" width="42" height="38" viewBox="1128 1032 42 38"><circle cx="1161" cy="1041" r="4" fill="#5b5fc7"/><circle cx="1151.500" cy="1039.500" r="5.500" fill="#7b83eb"/><rect x="1155" y="1046" width="12" height="15" rx="3" fill="#5b5fc7"/><path d="M1142 1046h17v12a8.500 8.500 0 0 1-17 0z" fill="#7b83eb"/><rect x="1130" y="1042" width="18" height="18" rx="2" fill="#4b53bc"/><text x="1139" y="1056" font-size="13" font-weight="700" fill="#fff" text-anchor="middle" font-family="Liberation Sans,sans-serif">T</text></svg>
<div class="abs" style="left:967px;top:1077px;width:62px;height:3px;background:#3fb0c0"></div>
<div class="abs" style="left:1043px;top:1077px;width:61px;height:3px;background:#3fb0c0"></div>
<div class="abs" style="left:1112px;top:1077px;width:73px;height:3px;background:#3fb0c0"></div>
<!-- tray -->
<svg style="left:1587px;top:1042px" width="24" height="16" viewBox="1587 1042 24 16"><path d="M1589.500 1054.500l9-9 9 9" fill="none" stroke="#111" stroke-width="1.400"/></svg>
<svg style="left:1640px;top:1038px" width="24" height="24" viewBox="1640 1038 24 24" fill="none" stroke="#111" stroke-width="1.300"><path d="M1650 1057l8-14c1-2 4-1 3 1l-7 14-4 2zM1644 1054c-2-4 4-8 6-4 1 3-2 6-4 6"/></svg>
<div class="t" style="left:1692.500px;top:1042px;font-size:17px;color:#111;letter-spacing:-.9px">ENG</div>
<div class="t" style="left:1767.500px;top:1029px;font-size:17px;color:#111">13:54</div>
<div class="t" style="left:1751px;top:1057px;font-size:17px;color:#111;letter-spacing:1px">7/4/2564</div>
<svg style="left:1855px;top:1036px" width="42" height="40" viewBox="1855 1036 42 40"><path d="M1858 1038h24v18.500h-5l-6 6v-6h-13z" fill="#111"/><path d="M1862 1043.500h16M1862 1047.500h16M1862 1051.500h11" stroke="#cfe3ea" stroke-width="1.300"/><circle cx="1881.700" cy="1061.500" r="11.500" fill="#c6d4d9" fill-opacity=".92" stroke="#8a979c" stroke-width="1"/><text x="1881.700" y="1067.500" font-size="17" font-weight="700" fill="#111" text-anchor="middle" font-family="Liberation Sans,sans-serif">1</text></svg>
<div class="abs" style="left:1912px;top:1020px;width:1px;height:60px;background:#9ab0b8"></div>

</body>
</html>
